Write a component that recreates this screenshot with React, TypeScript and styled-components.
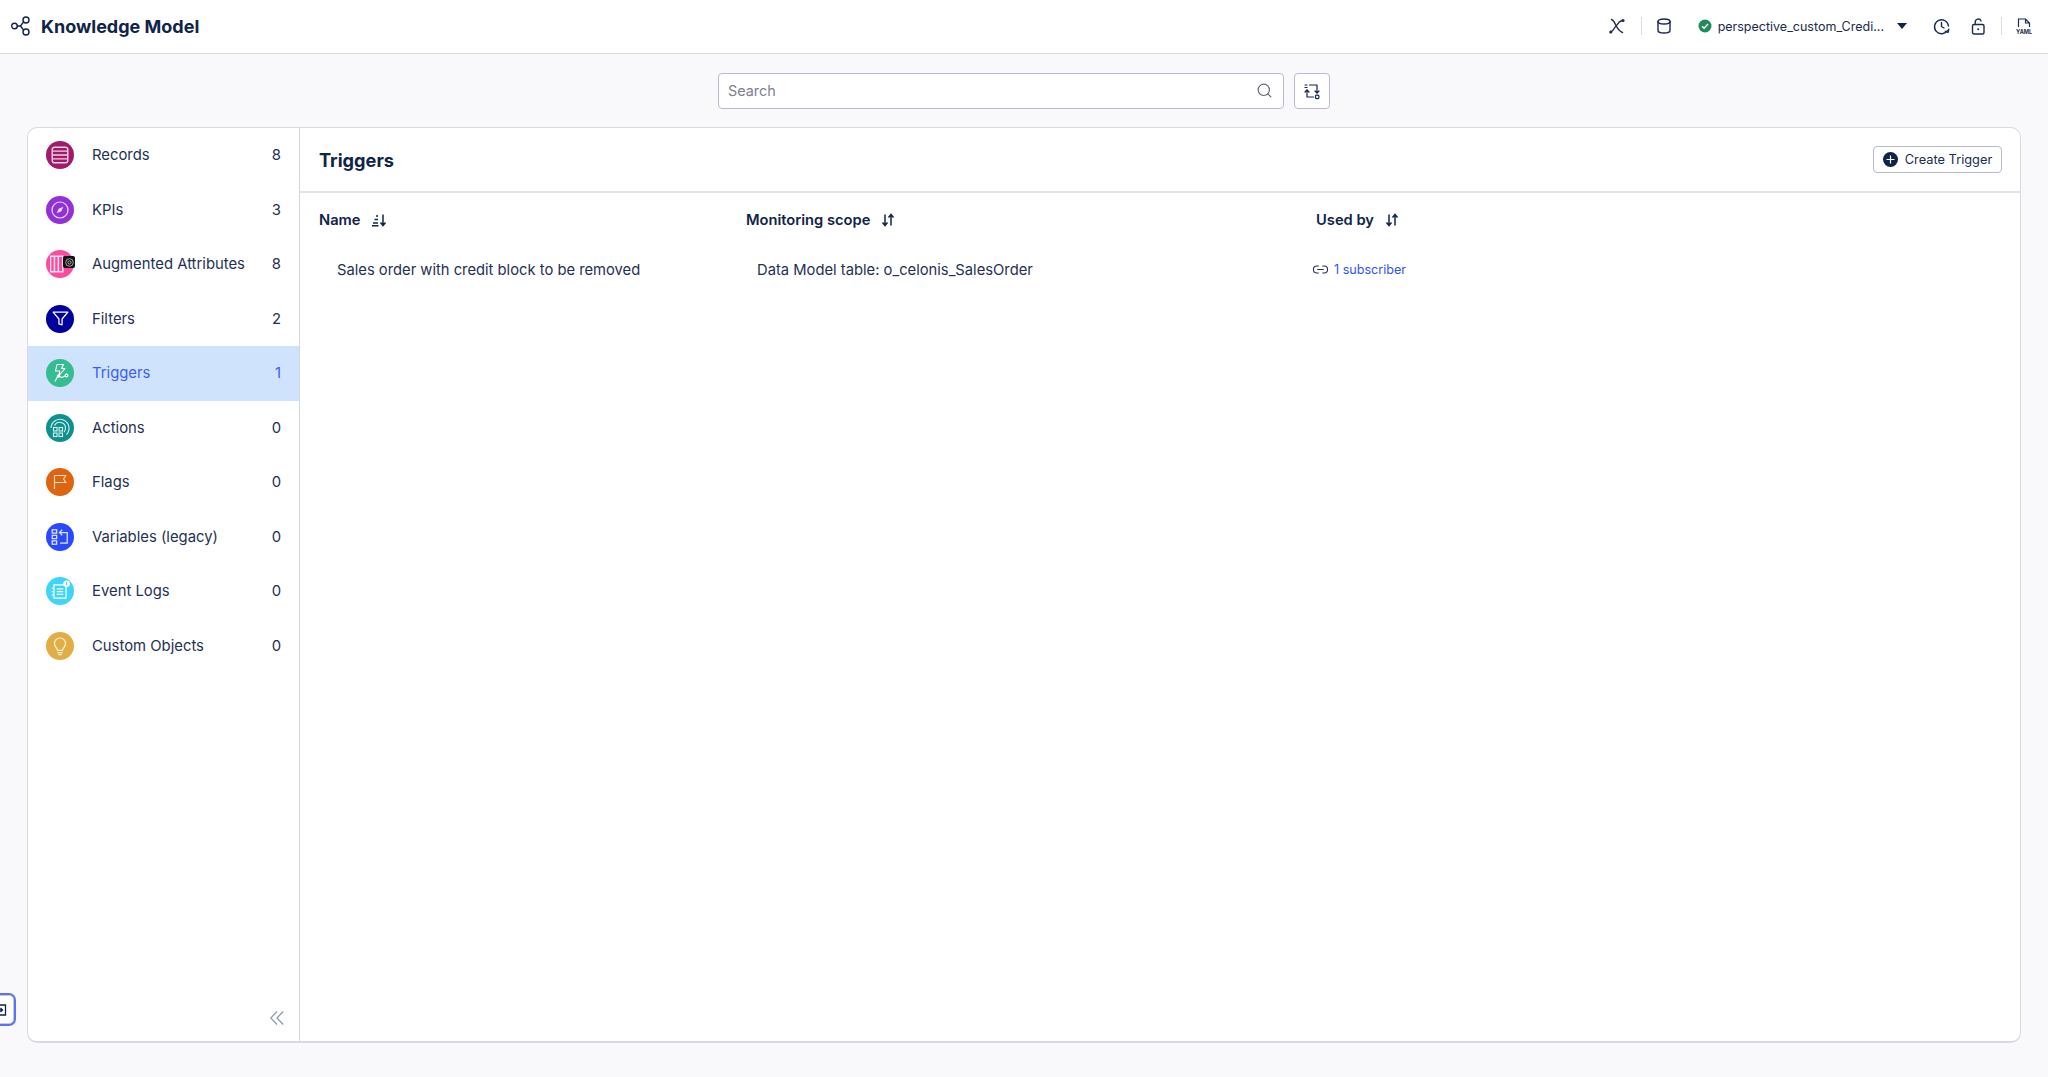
import { ReactNode } from "react";
import styled, { createGlobalStyle } from "styled-components";
import { Link2, Search } from "lucide-react";

const GlobalStyle = createGlobalStyle`
  html, body {
    margin: 0;
    padding: 0;
    background: #f9f9fc;
    font-family: Inter, "Liberation Sans", sans-serif;
    color: #1a2b4f;
  }
  * { box-sizing: border-box; }
`;

const Page = styled.div`
  position: relative;
  height: 1077px;
  display: flex;
  flex-direction: column;
  overflow: hidden;
`;

const Header = styled.header`
  height: 54px;
  flex: none;
  display: flex;
  align-items: center;
  justify-content: space-between;
  background: #fff;
  border-bottom: 1px solid #d9d9e6;
  padding: 0 16px 1px 11px;
`;

const Brand = styled.div`
  display: flex;
  align-items: center;
  gap: 10px;
`;

const BrandTitle = styled.h1`
  margin: 0;
  font-size: 18px;
  font-weight: 700;
  color: #0f2449;
`;

const HeaderTools = styled.div`
  display: flex;
  align-items: center;
  color: #1a2b4f;
`;

const ToolDivider = styled.span`
  width: 1px;
  height: 18px;
  background: #dcdce8;
  margin: 0 14px 0 16px;
`;

const ModelName = styled.span`
  display: flex;
  align-items: center;
  flex: none;
  white-space: nowrap;
  font-size: 12.5px;
  margin-left: 27px;
  gap: 6px;

  svg {
    flex: none;
  }
`;

const Caret = styled.span`
  width: 0;
  height: 0;
  border-left: 5px solid transparent;
  border-right: 5px solid transparent;
  border-top: 6px solid #0f2449;
  margin-left: 7px;
`;

const ToolIcon = styled.span<{ $left?: number }>`
  display: flex;
  margin-left: ${(p) => p.$left ?? 0}px;
`;

const SearchRow = styled.div`
  height: 73px;
  flex: none;
  display: flex;
  justify-content: center;
  align-items: flex-start;
  gap: 10px;
  padding-top: 19px;
`;

const SearchBox = styled.div`
  width: 566px;
  height: 36px;
  display: flex;
  align-items: center;
  justify-content: space-between;
  padding: 0 10px 1px 9px;
  background: #fff;
  border: 1px solid #b9b9cd;
  border-radius: 4px;
  font-size: 14.4px;
  color: #7d7f92;
`;

const IconButton = styled.button`
  width: 36px;
  height: 36px;
  padding: 0;
  display: flex;
  align-items: center;
  justify-content: center;
  background: #fff;
  border: 1px solid #b9b9cd;
  border-radius: 4px;
  color: #0f2449;
`;

const Card = styled.main`
  flex: none;
  height: 916px;
  margin: 0 27px;
  display: flex;
  background: #fff;
  border: 1px solid #d9d9e6;
  border-bottom-width: 2px;
  border-radius: 10px;
  overflow: hidden;
`;

const Sidebar = styled.aside`
  width: 272px;
  flex: none;
  display: flex;
  flex-direction: column;
  border-right: 1px solid #d5d5e3;
`;

const NavList = styled.nav`
  flex: 1;
`;

const NavItem = styled.div<{ $active?: boolean }>`
  height: 54.5px;
  display: flex;
  align-items: center;
  padding: 0 18px;
  font-size: 14.85px;
  background: ${(p) => (p.$active ? "#d0e3fd" : "transparent")};
  color: ${(p) => (p.$active ? "#3c5cf4" : "#1f3054")};
`;

const NavLabel = styled.span`
  flex: 1;
  margin-left: 18px;
`;

const IconCircle = styled.span<{ $bg: string }>`
  position: relative;
  width: 28px;
  height: 28px;
  flex: none;
  display: flex;
  align-items: center;
  justify-content: center;
  border-radius: 50%;
  background: ${(p) => p.$bg};
  color: #fff;
`;

const CornerBadge = styled.span`
  position: absolute;
  right: -1px;
  top: 6px;
  width: 12px;
  height: 12px;
  display: flex;
  align-items: center;
  justify-content: center;
  background: #111;
  border-radius: 2px;
`;

const Collapse = styled.div`
  height: 30px;
  flex: none;
  display: flex;
  justify-content: flex-end;
  padding-right: 15px;
  color: #8d9bb3;
`;

const Content = styled.section`
  flex: 1;
  display: flex;
  flex-direction: column;
`;

const PanelHead = styled.div`
  height: 65px;
  flex: none;
  display: flex;
  align-items: center;
  justify-content: space-between;
  padding: 0 18px 0 19px;
  border-bottom: 2px solid #e2e2ec;
`;

const PanelTitle = styled.h2`
  margin: 0;
  font-size: 18.2px;
  font-weight: 700;
  color: #0f2449;
`;

const CreateButton = styled.button`
  width: 129px;
  height: 27px;
  padding: 0;
  display: flex;
  align-items: center;
  justify-content: center;
  gap: 7px;
  background: #fff;
  border: 1px solid #b9b9cd;
  border-radius: 4px;
  font-family: inherit;
  font-size: 12.8px;
  color: #1a2b4f;
`;

const PlusDot = styled.span`
  width: 15px;
  height: 15px;
  display: flex;
  align-items: center;
  justify-content: center;
  border-radius: 50%;
  background: #0f2449;
`;

const Table = styled.div`
  display: grid;
  grid-template-columns: 427px 566px 1fr;
  padding-left: 19px;
`;

const HeadCell = styled.div<{ $inset?: number }>`
  height: 54px;
  display: flex;
  align-items: center;
  gap: 10px;
  padding-left: ${(p) => p.$inset ?? 0}px;
  font-size: 14.7px;
  font-weight: 600;
  color: #0f2449;
`;

const BodyCell = styled.div<{ $inset: number }>`
  height: 47px;
  display: flex;
  align-items: center;
  padding-left: ${(p) => p.$inset}px;
  padding-bottom: 2px;
  font-size: 14.75px;
  color: #1f3054;
`;

const SubscriberLink = styled.a`
  display: flex;
  align-items: center;
  gap: 5px;
  font-size: 12.6px;
  color: #2f55f0;
`;

const LinkGlyph = styled.span`
  display: flex;
  color: #1f3054;
`;

const EdgeWidget = styled.div`
  position: absolute;
  left: -24px;
  top: 993px;
  width: 40px;
  height: 33px;
  display: flex;
  align-items: center;
  justify-content: flex-end;
  padding-right: 7px;
  background: #fff;
  border: 2px solid #5a73ee;
  border-radius: 7px;
  box-shadow: inset 0 0 0 1px #c9c9d6;
`;

const stroke = {
  fill: "none",
  stroke: "currentColor",
  strokeWidth: 1.4,
  strokeLinecap: "round" as const,
  strokeLinejoin: "round" as const,
};

const BrandIcon = () => (
  <svg width="20" height="20" viewBox="0 0 20 20" {...stroke}>
    <circle cx="3.5" cy="10" r="2.8" stroke="#0f2449" />
    <circle cx="15" cy="4" r="3" stroke="#0f2449" />
    <circle cx="15" cy="16" r="3" stroke="#0f2449" />
    <path d="M6.3 10h3.2M12.6 5.8 9.5 10l3.1 4.2" stroke="#0f2449" />
  </svg>
);

const BranchIcon = () => (
  <svg width="16" height="16" viewBox="0 0 16 16" {...stroke}>
    <path d="M1.8 14C5 13 5 9 8 7M2.5 1.5C7 3 6.5 12 13.5 14.5M8 7c1.5-2.5 3-4 5-4.500" />
    <circle cx="1.8" cy="14" r="1.6" fill="currentColor" stroke="none" />
    <circle cx="14" cy="2.5" r="1.6" fill="currentColor" stroke="none" />
  </svg>
);

const DatabaseIcon = () => (
  <svg width="14" height="16" viewBox="0 0 14 16" {...stroke}>
    <path d="M1 3.5C1 2 3.5 1 7 1s6 1 6 2.5v9C13 14 10.5 15 7 15s-6-1-6-2.500z" />
    <path d="M1 3.5C1 5 3.5 6 7 6s6-1 6-2.500" />
  </svg>
);

const LockIcon = () => (
  <svg width="14" height="17" viewBox="0 0 14 17" {...stroke}>
    <rect x="1.5" y="6.5" width="11.5" height="9.5" rx="1.5" />
    <path d="M4.2 6.5V4a3 3 0 0 1 5.800-1" />
    <circle cx="7.2" cy="11.2" r="1" fill="currentColor" stroke="none" />
  </svg>
);

const CheckDot = () => (
  <svg width="14" height="14" viewBox="0 0 14 14">
    <circle cx="7" cy="7" r="6.5" fill="#1e8a5e" />
    <path d="m4 7.2 2.1 2L10 5" fill="none" stroke="#fff" strokeWidth="1.5" />
  </svg>
);

const HistoryIcon = () => (
  <svg width="17" height="17" viewBox="0 0 17 17" {...stroke}>
    <path d="M14.5 12.5A7 7 0 1 1 15.5 8" />
    <path d="M8.5 4.5v4l2.5 1.500M15.8 11.3l-.7 3-2.800-1" />
  </svg>
);

const YamlIcon = () => (
  <svg width="16" height="17" viewBox="0 0 16 17">
    <path d="M2.5 9V1h7l4 4v4M9.5 1v4h4" fill="none" stroke="currentColor" strokeWidth="1.2" />
    <text x="0" y="16" fontSize="5.6" fontWeight="700" fontFamily="Inter, sans-serif" fill="currentColor">YAML</text>
  </svg>
);

const ModelSwitchIcon = () => (
  <svg width="18" height="18" viewBox="0 0 18 18" {...stroke} strokeWidth={1.2}>
    <path d="M2 3h2M2 5.500h2M6.500 3h7.500v8M12 9l2 2.200 2-2.200M4 8v7h6.500M2 10l2-2.200 2 2.200" />
    <rect x="12.5" y="13.2" width="3.4" height="3.4" rx="1" />
  </svg>
);

const CollapseIcon = () => (
  <svg width="14" height="14" viewBox="0 0 14 14" fill="none" stroke="currentColor" strokeWidth="1.3">
    <path d="M7 .5.8 7 7 13.500M13.200 .5 7 7l6.200 6.500" />
  </svg>
);

const icons: Record<string, ReactNode> = {
  records: (
    <svg width="20" height="20" viewBox="0 0 18 18" fill="none" stroke="#f2cfe2" strokeWidth="1.3">
      <rect x="2" y="2" width="14" height="14" rx="2" />
      <path d="M2 5.500h14M2 9h14M2 12.500h14" />
    </svg>
  ),
  kpis: (
    <svg width="20" height="20" viewBox="0 0 18 18" fill="none" stroke="#eadcf8" strokeWidth="1.1">
      <circle cx="9" cy="9" r="7.200" />
      <path d="m12 6-1.800 4.200L6 12l1.800-4.200z" fill="#eadcf8" stroke="none" />
    </svg>
  ),
  augmented: (
    <svg width="20" height="20" viewBox="0 0 18 18" fill="none" stroke="#ffe4f1" strokeWidth="1.3">
      <path d="M.5 2h11v14H.5zM4 2v14M7.5 2v14" />
    </svg>
  ),
  filters: (
    <svg width="19" height="19" viewBox="0 0 18 18" fill="none" stroke="#fff" strokeWidth="1.2" strokeLinejoin="round">
      <path d="M2 3h14L10.500 9.500V15L7.500 14V9.500z" />
    </svg>
  ),
  triggers: (
    <svg width="20" height="20" viewBox="0 0 20 20" fill="none" stroke="#fff" strokeWidth="1.1" strokeLinejoin="round">
      <path d="M7 1.500h6.500L11.500 5.500H15L9 12.500l.7-4.500H5.500z" />
      <path d="M5 18.500 8 12.500l3.500 2 4-1.500" />
      <circle cx="16.500" cy="12.500" r="1.400" />
      <circle cx="8.500" cy="13" r="1.200" fill="#fff" />
    </svg>
  ),
  actions: (
    <svg width="24" height="24" viewBox="0 0 24 24" fill="none" stroke="#d6f0ef" strokeWidth="1.1">
      <path d="M3 12a9 9 0 1 1 15.500 6.500" />
      <path d="M6.500 9.500A5.800 5.800 0 0 1 17.500 12a5.500 5.500 0 0 1-1.500 4" />
      <rect x="5.500" y="11.500" width="3.500" height="3.500" />
      <rect x="11" y="11.500" width="3.500" height="3.500" />
      <rect x="5.500" y="17" width="3.500" height="3.500" />
      <rect x="11" y="17" width="3.500" height="3.500" />
    </svg>
  ),
  flags: (
    <svg width="18" height="18" viewBox="0 0 18 18" fill="none" stroke="#fbdcc4" strokeWidth="1.2" strokeLinejoin="round">
      <path d="M3.500 16V2.500h11.500l-2.500 3.500L15 9.500H3.500" />
    </svg>
  ),
  variables: (
    <svg width="20" height="20" viewBox="0 0 18 18" fill="none" stroke="#e3e8ff" strokeWidth="1.1">
      <rect x="2" y="2.500" width="4" height="3" />
      <rect x="2" y="7.500" width="4" height="3" />
      <rect x="2" y="12.500" width="4" height="3" />
      <path d="M11 2.500 8.500 5 11 7.500M8.500 5h7v9.500H9" />
    </svg>
  ),
  events: (
    <svg width="22" height="22" viewBox="0 0 20 20" fill="none" stroke="#fff" strokeWidth="1.1">
      <path d="M4.500 4.500h11v12h-11zM2.500 7.500h2M2.500 10.500h2M2.500 13.500h2M7 8h6M7 10.500h6M7 13h6" />
      <circle cx="16" cy="3.500" r="3" fill="#fff" stroke="none" />
      <path d="M16 2v2.500" stroke="#3fd4f7" />
    </svg>
  ),
  custom: (
    <svg width="20" height="20" viewBox="0 0 18 18" fill="none" stroke="#fdf3db" strokeWidth="1.1" strokeLinecap="round">
      <path d="M6.800 13c0-2-2.800-3-2.800-6.200a5 5 0 0 1 10 0C14 10 11.200 11 11.200 13z" />
      <path d="M7 15h4M8 16.700h2" />
    </svg>
  ),
};

const navItems = [
  { key: "records", label: "Records", count: 8, bg: "#a01a6c" },
  { key: "kpis", label: "KPIs", count: 3, bg: "#9231d6" },
  { key: "augmented", label: "Augmented Attributes", count: 8, bg: "#fb4da0" },
  { key: "filters", label: "Filters", count: 2, bg: "#00009c" },
  { key: "triggers", label: "Triggers", count: 1, bg: "#35bc90" },
  { key: "actions", label: "Actions", count: 0, bg: "#0e908e" },
  { key: "flags", label: "Flags", count: 0, bg: "#de650f" },
  { key: "variables", label: "Variables (legacy)", count: 0, bg: "#2a49ff" },
  { key: "events", label: "Event Logs", count: 0, bg: "#40d5f8" },
  { key: "custom", label: "Custom Objects", count: 0, bg: "#e1ae46" },
];

const SortIcon = ({ named }: { named?: boolean }) => (
  <svg width="16" height="14" viewBox="0 0 16 14" fill="none" stroke="#0f2449" strokeWidth="1.5">
    {named ? (
      <path d="M5 3h2M3.500 6.500h3.500M2 10h5M1 12.800h6.500M12 1.500v10.500M9.500 9.500l2.500 3 2.500-3" />
    ) : (
      <path d="M5 1.500v10.500M2.500 9.500l2.500 3 2.500-3M11 12.500V2M8.500 4.500l2.500-3 2.500 3" />
    )}
  </svg>
);

function App() {
  return (
    <Page>
      <GlobalStyle />
      <Header>
        <Brand>
          <BrandIcon />
          <BrandTitle>Knowledge Model</BrandTitle>
        </Brand>
        <HeaderTools>
          <BranchIcon />
          <ToolDivider />
          <ToolIcon $left={1}>
            <DatabaseIcon />
          </ToolIcon>
          <ModelName>
            <CheckDot />
            perspective_custom_Credi...
            <Caret />
          </ModelName>
          <ToolIcon $left={26}>
            <HistoryIcon />
          </ToolIcon>
          <ToolIcon $left={21}>
            <LockIcon />
          </ToolIcon>
          <ToolDivider />
          <YamlIcon />
        </HeaderTools>
      </Header>

      <SearchRow>
        <SearchBox>
          Search
          <Search size={17} strokeWidth={1.6} color="#5f6478" />
        </SearchBox>
        <IconButton>
          <ModelSwitchIcon />
        </IconButton>
      </SearchRow>

      <Card>
        <Sidebar>
          <NavList>
            {navItems.map((item) => (
              <NavItem key={item.key} $active={item.key === "triggers"}>
                <IconCircle $bg={item.bg}>
                  {icons[item.key]}
                  {item.key === "augmented" && (
                    <CornerBadge>
                      <svg width="9" height="9" viewBox="0 0 9 9" fill="none" stroke="#ccc" strokeWidth="0.8">
                        <circle cx="4.500" cy="4.500" r="3.800" />
                        <circle cx="4.500" cy="4.500" r="1.600" />
                      </svg>
                    </CornerBadge>
                  )}
                </IconCircle>
                <NavLabel>{item.label}</NavLabel>
                {item.count}
              </NavItem>
            ))}
          </NavList>
          <Collapse>
            <CollapseIcon />
          </Collapse>
        </Sidebar>

        <Content>
          <PanelHead>
            <PanelTitle>Triggers</PanelTitle>
            <CreateButton>
              <PlusDot>
                <svg width="9" height="9" viewBox="0 0 9 9" stroke="#fff" strokeWidth="1.2">
                  <path d="M4.500 .5v8M.5 4.500h8" />
                </svg>
              </PlusDot>
              Create Trigger
            </CreateButton>
          </PanelHead>
          <Table>
            <HeadCell>
              Name <SortIcon named />
            </HeadCell>
            <HeadCell>
              Monitoring scope <SortIcon />
            </HeadCell>
            <HeadCell $inset={4}>
              Used by <SortIcon />
            </HeadCell>
            <BodyCell $inset={18}>Sales order with credit block to be removed</BodyCell>
            <BodyCell $inset={11}>Data Model table: o_celonis_SalesOrder</BodyCell>
            <BodyCell $inset={0}>
              <SubscriberLink>
                <LinkGlyph>
                  <Link2 size={17} strokeWidth={1.5} />
                </LinkGlyph>
                1 subscriber
              </SubscriberLink>
            </BodyCell>
          </Table>
        </Content>
      </Card>

      <EdgeWidget>
        <svg width="10" height="12" viewBox="0 0 10 12" fill="none" stroke="#0f2449" strokeWidth="1.3">
          <path d="M0 1h8.500v10H0" />
          <path d="M1 6h4M3.500 4l2 2-2 2" />
        </svg>
      </EdgeWidget>
    </Page>
  );
}

export default App;
